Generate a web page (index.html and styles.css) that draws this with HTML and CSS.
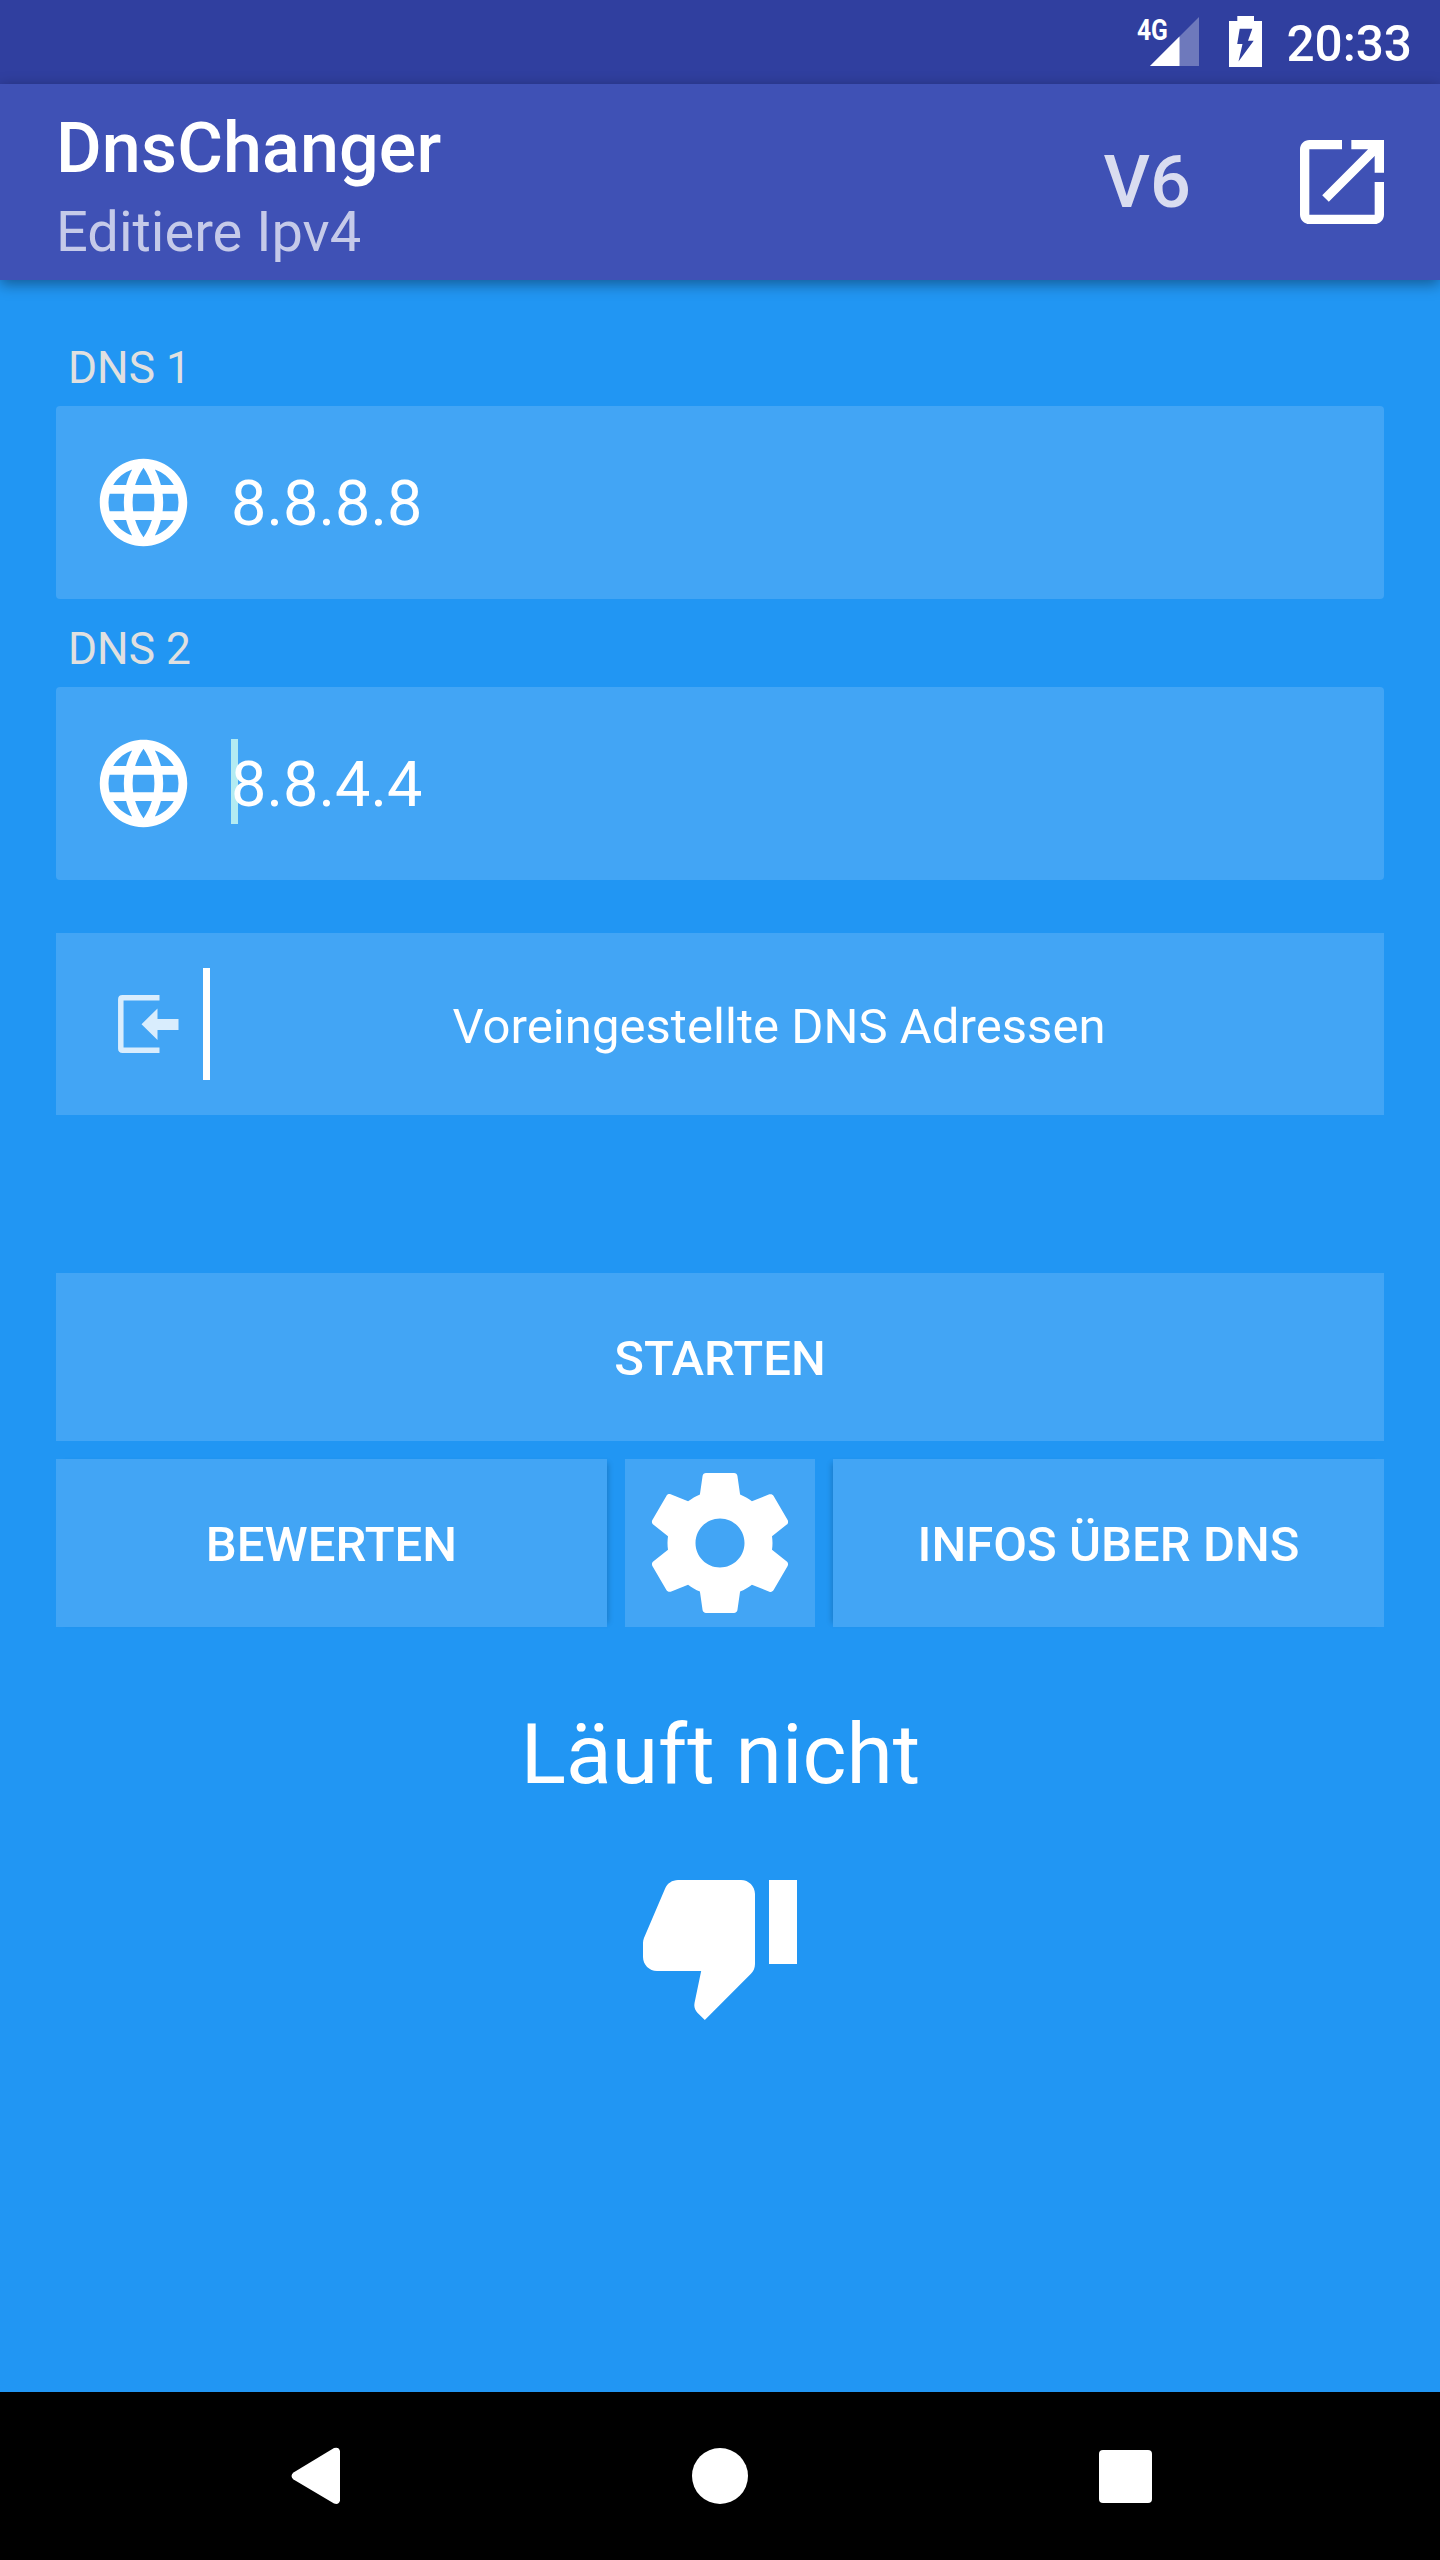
FILE: index.html
```html
<!DOCTYPE html>
<html lang="de">
  <head>
    <meta charset="utf-8">
    <title>DnsChanger</title>
    <link rel="stylesheet" href="styles.css">
  </head>
  <body>
  <div class="status-bar">
    <div class="signal">
      <span class="network">4G</span>
      <svg width="49" height="49" viewBox="0 0 49 49">
        <path d="M49 0v49H0z" fill="#fff" fill-opacity=".3"/>
        <path d="M29.5 19.5V49H0z" fill="#fff"/>
      </svg>
    </div>
    <svg class="battery" width="33" height="51" viewBox="0 0 33 51">
      <path d="M8.3 0H25v5h8v46H0V5h8.3z" fill="#fff"/>
      <path d="M10.7 12.7h12.6l-4.3 12h5.7L9.5 45.5l4-17.5H8.2z" fill="#303f9f"/>
    </svg>
    <span class="clock">20:33</span>
  </div>

  <header class="app-bar">
    <div class="titles">
      <h1 class="title">DnsChanger</h1>
      <p class="subtitle">Editiere Ipv4</p>
    </div>
    <span class="version">V6</span>
    <svg class="open" width="112" height="112" viewBox="0 0 24 24">
      <path d="M19 19H5V5h7V3H5c-1.11 0-2 .9-2 2v14c0 1.1.89 2 2 2h14c1.1 0 2-.9 2-2v-7h-2v7zM14 3v2h3.59l-9.83 9.83 1.41 1.41L19 6.41V10h2V3h-7z"/>
    </svg>
  </header>

  <main>
    <label class="label">DNS 1</label>
    <div class="field">
      <svg class="globe" width="105" height="105" viewBox="0 0 24 24">
        <path d="M11.99 2C6.47 2 2 6.48 2 12s4.47 10 9.99 10C17.52 22 22 17.52 22 12S17.52 2 11.99 2zm6.93 6h-2.95c-.32-1.25-.78-2.45-1.38-3.56 1.84.63 3.37 1.91 4.33 3.56zM12 4.04c.83 1.2 1.48 2.53 1.91 3.96h-3.82c.43-1.43 1.08-2.76 1.91-3.96zM4.26 14C4.1 13.36 4 12.69 4 12s.1-1.36.26-2h3.38c-.08.66-.14 1.32-.14 2 0 .68.06 1.34.14 2H4.26zm.82 2h2.95c.32 1.25.78 2.45 1.38 3.56-1.84-.63-3.37-1.9-4.33-3.56zm2.95-8H5.08c.96-1.66 2.49-2.93 4.33-3.56C8.81 5.55 8.35 6.75 8.03 8zM12 19.96c-.83-1.2-1.48-2.53-1.91-3.96h3.82c-.43 1.43-1.08 2.76-1.91 3.96zM14.34 14H9.66c-.09-.66-.16-1.32-.16-2 0-.68.07-1.35.16-2h4.68c.09.65.16 1.32.16 2 0 .68-.07 1.34-.16 2zm.25 5.56c.6-1.11 1.06-2.31 1.38-3.56h2.95c-.96 1.65-2.49 2.93-4.33 3.56zM16.36 14c.08-.66.14-1.32.14-2 0-.68-.06-1.34-.14-2h3.38c.16.64.26 1.31.26 2s-.1 1.36-.26 2h-3.38z"/>
      </svg>
      <span class="address">8.8.8.8</span>
    </div>

    <label class="label second">DNS 2</label>
    <div class="field">
      <svg class="globe" width="105" height="105" viewBox="0 0 24 24">
        <path d="M11.99 2C6.47 2 2 6.48 2 12s4.47 10 9.99 10C17.52 22 22 17.52 22 12S17.52 2 11.99 2zm6.93 6h-2.95c-.32-1.25-.78-2.45-1.38-3.56 1.84.63 3.37 1.91 4.33 3.56zM12 4.04c.83 1.2 1.48 2.53 1.91 3.96h-3.82c.43-1.43 1.08-2.76 1.91-3.96zM4.26 14C4.1 13.36 4 12.69 4 12s.1-1.36.26-2h3.38c-.08.66-.14 1.32-.14 2 0 .68.06 1.34.14 2H4.26zm.82 2h2.95c.32 1.25.78 2.45 1.38 3.56-1.84-.63-3.37-1.9-4.33-3.56zm2.95-8H5.08c.96-1.66 2.49-2.93 4.33-3.56C8.81 5.55 8.35 6.75 8.03 8zM12 19.96c-.83-1.2-1.48-2.53-1.91-3.96h3.82c-.43 1.43-1.08 2.76-1.91 3.96zM14.34 14H9.66c-.09-.66-.16-1.32-.16-2 0-.68.07-1.35.16-2h4.68c.09.65.16 1.32.16 2 0 .68-.07 1.34-.16 2zm.25 5.56c.6-1.11 1.06-2.31 1.38-3.56h2.95c-.96 1.65-2.49 2.93-4.33 3.56zM16.36 14c.08-.66.14-1.32.14-2 0-.68-.06-1.34-.14-2h3.38c.16.64.26 1.31.26 2s-.1 1.36-.26 2h-3.38z"/>
      </svg>
      <span class="address focused">8.8.4.4</span>
    </div>

    <button class="presets" type="button">
      <svg class="import" width="62" height="60" viewBox="0 0 62 60">
        <path d="M42.5 3.8H5.5q-1.7 0-1.7 1.7v49q0 1.7 1.7 1.7h37" fill="none" stroke="#fff" stroke-width="5.5"/>
        <path d="M24.5 30.2L40.5 14.5V25h21v11h-21v10z" fill="#fff"/>
      </svg>
      <span class="divider"></span>
      <span class="presets-text">Voreingestellte DNS Adressen</span>
    </button>

    <button class="start" type="button">STARTEN</button>
    <div class="actions">
      <button class="rate" type="button">BEWERTEN</button>
      <button class="settings" type="button">
        <svg width="168" height="168" viewBox="0 0 24 24">
          <path d="M19.43 12.98c.04-.32.07-.64.07-.98s-.03-.66-.07-.98l2.11-1.65c.19-.15.24-.42.12-.64l-2-3.46c-.12-.22-.39-.3-.61-.22l-2.49 1c-.52-.4-1.08-.73-1.69-.98l-.38-2.65C14.46 2.18 14.25 2 14 2h-4c-.25 0-.46.18-.49.42l-.38 2.65c-.61.25-1.17.59-1.69.98l-2.49-1c-.23-.09-.49 0-.61.22l-2 3.46c-.13.22-.07.49.12.64l2.11 1.65c-.04.32-.07.65-.07.98s.03.66.07.98l-2.11 1.65c-.19.15-.24.42-.12.64l2 3.46c.12.22.39.3.61.22l2.49-1c.52.4 1.08.73 1.69.98l.38 2.65c.03.24.24.42.49.42h4c.25 0 .46-.18.49-.42l.38-2.65c.61-.25 1.17-.59 1.69-.98l2.49 1c.23.09.49 0 .61-.22l2-3.46c.12-.22.07-.49-.12-.64l-2.11-1.65zM12 15.5c-1.93 0-3.5-1.57-3.5-3.5s1.57-3.5 3.5-3.5 3.5 1.57 3.5 3.5-1.57 3.5-3.5 3.5z"/>
        </svg>
      </button>
      <button class="info" type="button">INFOS ÜBER DNS</button>
    </div>

    <p class="state">Läuft nicht</p>
    <svg class="thumb" width="168" height="168" viewBox="0 0 24 24">
      <path d="M15 3H6c-.83 0-1.54.5-1.84 1.22l-3.02 7.05c-.09.23-.14.47-.14.73v2c0 1.1.9 2 2 2h6.31l-.95 4.57-.03.32c0 .41.17.79.44 1.06L9.83 23l6.59-6.59c.36-.36.58-.86.58-1.41V5c0-1.1-.9-2-2-2zm4 0v12h4V3h-4z"/>
    </svg>
  </main>

  <nav class="nav-bar">
    <svg width="50" height="58" viewBox="0 0 50 58">
      <path d="M43 1L2.5 25.5q-4 3.500 0 7L43 56.5q5 1.500 6-3V4q-1-4.500-6-3z"/>
    </svg>
    <svg width="57" height="57" viewBox="0 0 57 57">
      <circle cx="28" cy="28" r="28"/>
    </svg>
    <svg width="53" height="53" viewBox="0 0 53 53">
      <rect width="53" height="53" rx="4"/>
    </svg>
  </nav>
  </body>
</html>
```
FILE: styles.css
```css
* {
  box-sizing: border-box;
}
body {
  width: 1440px;
  height: 2560px;
  margin: 0;
  display: flex;
  flex-direction: column;
  overflow: hidden;
  font-family: Roboto, sans-serif;
  background-color: #2196f3;
  color: #fff;
}
h1, p {
  margin: 0;
}
svg {
  display: block;
  flex: none;
  fill: #fff;
}
button {
  border: none;
  padding: 0;
  background-color: #42a5f5;
  color: #fff;
  font-family: inherit;
  font-size: 49px;
  font-weight: 500;
  letter-spacing: 0.05px;
}

.status-bar {
  height: 84px;
  padding: 0 28px 0 0;
  display: flex;
  justify-content: flex-end;
  align-items: flex-start;
  background-color: #303f9f;
}
.signal {
  position: relative;
  margin-top: 17px;
}
.network {
  position: absolute;
  top: -2px;
  left: -13px;
  font-size: 30px;
  line-height: 29px;
  font-weight: 700;
  transform: scaleX(0.82);
  transform-origin: left;
}
.battery {
  margin: 16px 24px 0 30px;
}
.clock {
  font-size: 49.5px;
  line-height: 58px;
  font-weight: 500;
  margin-top: 15px;
}

.app-bar {
  height: 196px;
  display: flex;
  align-items: flex-start;
  padding: 0 42px 0 56px;
  background-color: #3f51b5;
  box-shadow: 0 4px 14px rgba(0, 0, 0, 0.4);
}
.titles {
  flex: 1;
  padding-top: 23px;
}
.title {
  font-size: 70px;
  line-height: 82px;
  font-weight: 500;
  letter-spacing: 0.15px;
}
.subtitle {
  margin-top: 10px;
  font-size: 56px;
  line-height: 66px;
  color: #c5cae9;
}
.version {
  margin: 57px 95px 0 0;
  font-size: 72px;
  line-height: 84px;
  font-weight: 500;
  color: #d9dcf0;
}
.open {
  margin-top: 42px;
}

main {
  flex: 1;
  display: flex;
  flex-direction: column;
  padding: 62px 56px 0;
}
.label {
  padding-left: 12px;
  margin-bottom: 11px;
  font-size: 44.3px;
  line-height: 53px;
  color: #e0e0e0;
}
.second {
  margin-top: 24px;
}
.field {
  height: 193px;
  padding-left: 35px;
  display: flex;
  align-items: center;
  border-radius: 4px;
  background-color: #42a5f5;
}
.address {
  position: relative;
  z-index: 0;
  margin-left: 35px;
  padding-top: 2px;
  font-size: 63px;
  line-height: 74px;
}
/* text cursor */
.focused::before {
  content: "";
  position: absolute;
  z-index: -1;
  left: 0;
  top: -7px;
  width: 7px;
  height: 85px;
  background-color: #b2ebf2;
}

.presets {
  height: 182px;
  margin-top: 53px;
  padding-left: 61px;
  display: flex;
  align-items: center;
  font-weight: 400;
}
.import {
  opacity: 0.8;
}
.divider {
  width: 7px;
  height: 112px;
  margin-left: 24px;
  background-color: #fff;
}
.presets-text {
  flex: 1;
  padding: 4px 36px 0 0;
}

.start {
  height: 168px;
  margin-top: 158px;
  padding-top: 3px;
}
.actions {
  height: 168px;
  margin-top: 18px;
  display: flex;
  gap: 18px;
}
.rate, .info {
  flex: 1;
  padding-top: 3px;
}
.rate {
  box-shadow: 5px 0 6px -4px rgba(0, 0, 0, 0.2);
}
.info {
  box-shadow: -5px 0 6px -4px rgba(0, 0, 0, 0.2);
}
.settings {
  width: 190px;
  display: flex;
  justify-content: center;
}

.state {
  margin-top: 79px;
  font-size: 84px;
  line-height: 98px;
  text-align: center;
  text-indent: 1px;
}
.thumb {
  margin-top: 55px;
  align-self: center;
}

.nav-bar {
  height: 168px;
  display: flex;
  justify-content: space-between;
  align-items: center;
  padding: 0 288px 0 291px;
  background-color: #000;
}
```
